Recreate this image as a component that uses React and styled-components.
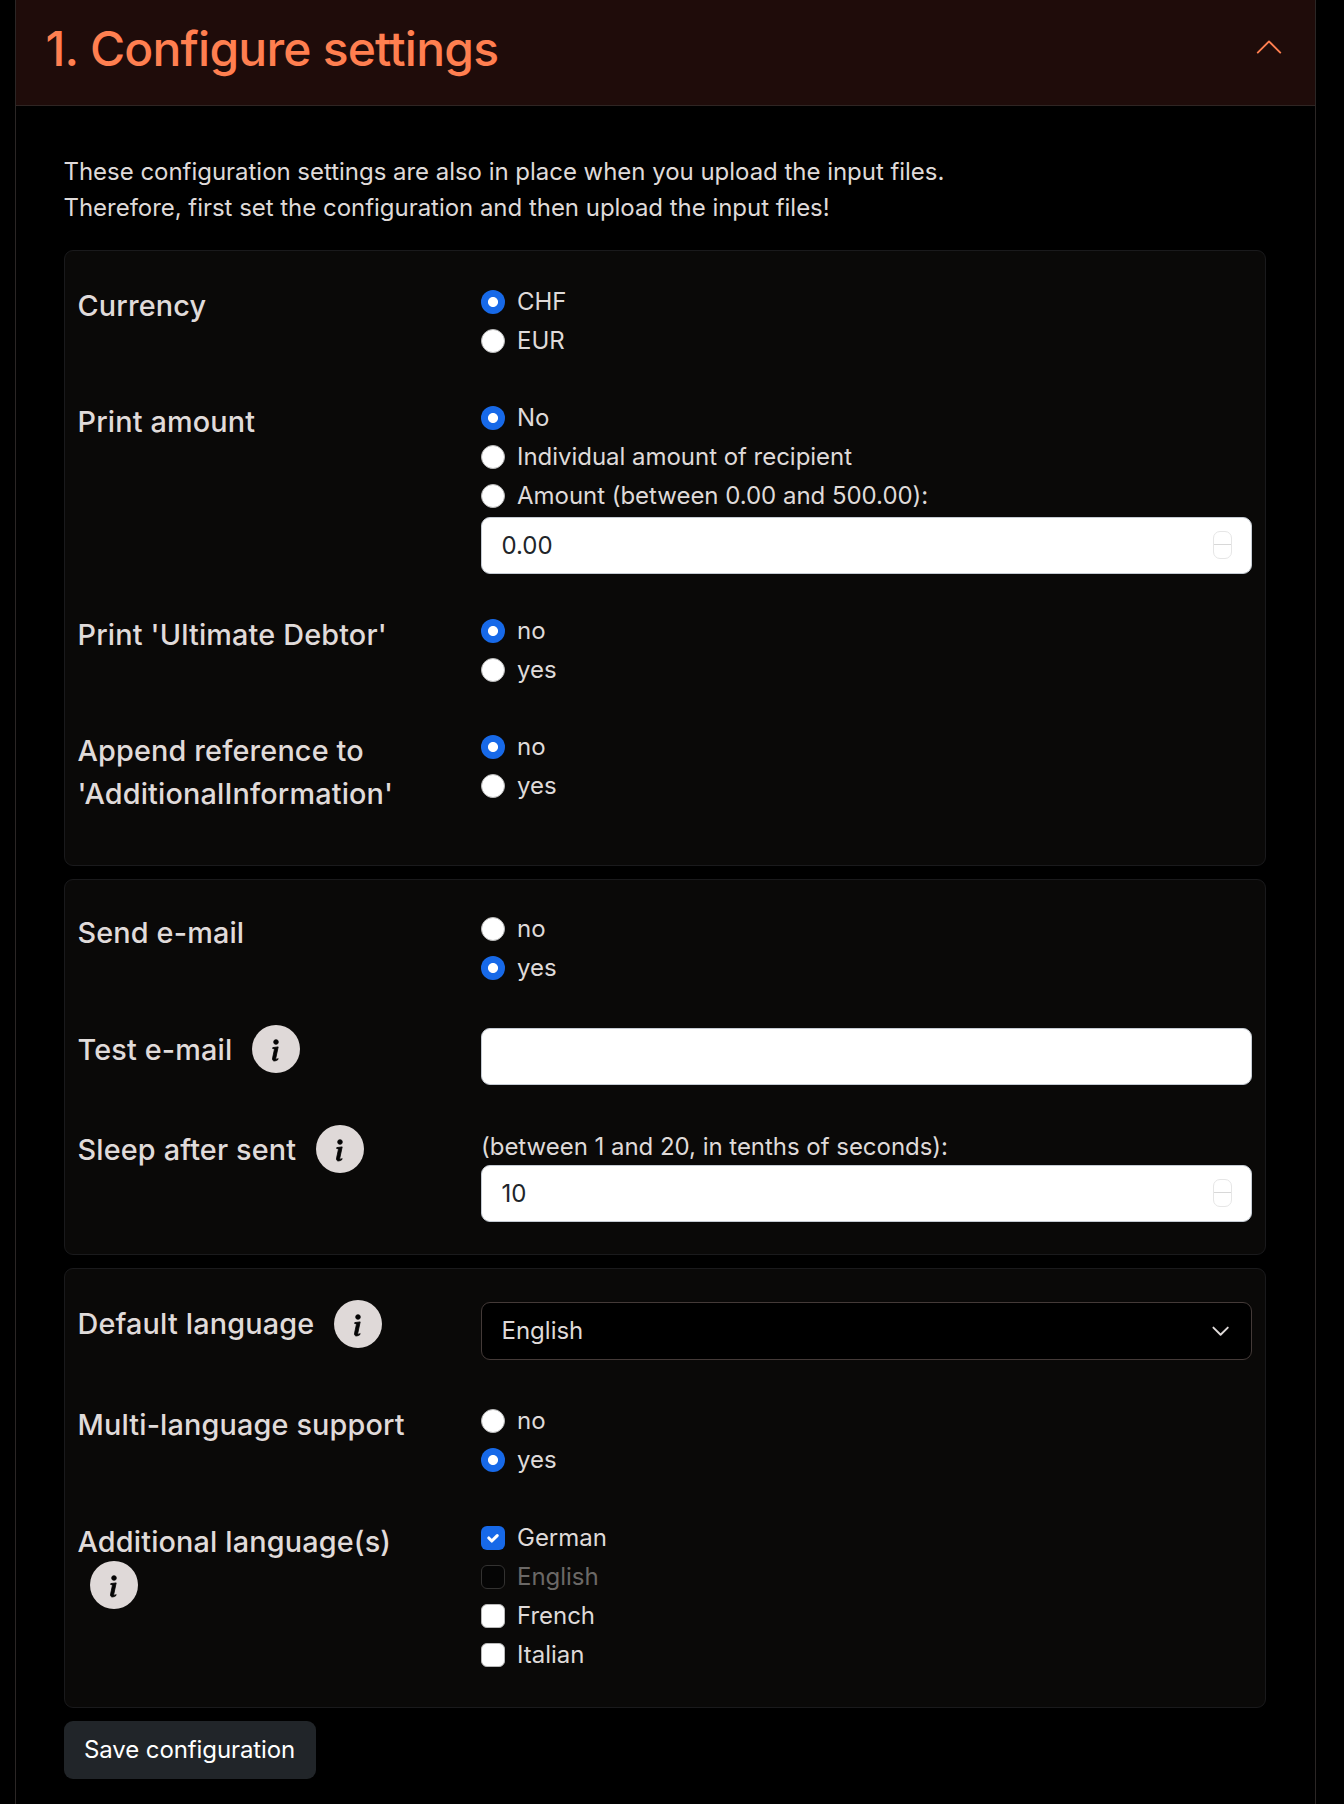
import React from 'react'
import styled, { createGlobalStyle } from 'styled-components'

const GlobalStyle = createGlobalStyle`
html, body {
  margin: 0;
  background: #000;
}
body {
  font-family: Inter, "Liberation Sans", sans-serif;
  font-size: 24px;
  line-height: 36px;
  letter-spacing: -0.03px;
  color: #dfdad9;
  overflow: hidden;
}
`

const Accordion = styled.div`
  box-sizing: border-box;
  width: 1301px;
  height: 1804px;
  margin-left: 14.5px;
  border-left: 1.5px solid #2b2625;
  border-right: 1.5px solid #2b2625;
`

const Header = styled.div`
  box-sizing: border-box;
  height: 106px;
  padding: 0 31px 0 30px;
  display: flex;
  align-items: center;
  justify-content: space-between;
  background: #1f0c0a;
  border-bottom: 1.5px solid #2f2523;
  color: #ff7f50;
`

const Title = styled.h2`
  margin: 0 0 7px;
  font-size: 48px;
  font-weight: 500;
  line-height: 58px;
  letter-spacing: -0.8px;
`

const Chevron = styled.svg`
  width: 30px;
  height: 30px;
  margin-bottom: 12px;
  transform: rotate(180deg);
`

const Body = styled.div`
  padding: 48px 48px 0;
`

const Intro = styled.p`
  margin: 0 0 24px;
`

const Card = styled.section`
  box-sizing: border-box;
  width: 1202px;
  margin-bottom: 13.5px;
  padding: ${p => p.$pt || 32}px 13px 18.5px;
  background: #0a0908;
  border: 1.5px solid #1a1a1c;
  border-radius: 9px;
`

const Row = styled.div`
  display: grid;
  grid-template-columns: 403.5px 1fr;
  margin-bottom: ${p => p.$mb || 38.5}px;
`

const Label = styled.div`
  padding-right: 30px;
  font-size: 28.8px;
  font-weight: 500;
  line-height: 43.2px;
  letter-spacing: 0.16px;
  color: #e0dbda;
`

const InfoSvg = styled.svg`
  display: inline-block;
  width: 48px;
  height: 48px;
  margin: -7px 0 -1px 12px;
  vertical-align: middle;
`

const Option = styled.label`
  display: flex;
  align-items: center;
  gap: 12px;
  height: 36px;
  margin-bottom: 3px;
  color: ${p => (p.$disabled ? '#6b6866' : '#dfdad9')};
`

const Radio = styled.input.attrs({ type: 'radio' })`
  appearance: none;
  box-sizing: border-box;
  width: 24px;
  height: 24px;
  margin: 0;
  border-radius: 50%;
  border: 1.5px solid #b8b8b8;
  background: #fff;

  &:checked {
    border: 0;
    background: radial-gradient(circle, #fff 0 4.6px, #1769e8 5.4px);
  }
`

const CheckWrap = styled.span`
  position: relative;
  display: flex;
  width: 24px;
  height: 24px;
`

const CheckBox = styled.input.attrs({ type: 'checkbox' })`
  appearance: none;
  box-sizing: border-box;
  width: 24px;
  height: 24px;
  margin: 0;
  border-radius: 6px;
  border: 1.5px solid #b8b8b8;
  background: #fff;

  &:checked {
    border: 0;
    background: #1769e8;
  }

  &:disabled {
    border-color: #333231;
    background: #050505;
  }
`

const CheckMark = styled.svg`
  position: absolute;
  inset: 0;
  width: 24px;
  height: 24px;
  pointer-events: none;
`

const HelpText = styled.div`
  margin-top: 1px;
`

const FieldWrap = styled.div`
  position: relative;
  height: 57.5px;
`

const TextField = styled.input`
  box-sizing: border-box;
  width: 100%;
  height: 100%;
  padding: 0 19.5px;
  font: 400 24px/36px Inter, "Liberation Sans", sans-serif;
  color: #212529;
  background: #fff;
  border: 1.5px solid #c5cbd3;
  border-radius: 9px;
  outline: none;
  appearance: textfield;

  &::-webkit-inner-spin-button,
  &::-webkit-outer-spin-button {
    appearance: none;
    margin: 0;
  }
`

const Stepper = styled.span`
  position: absolute;
  top: 14px;
  right: 20px;
  box-sizing: border-box;
  width: 19px;
  height: 28px;
  border: 1.5px solid #e6e6e6;
  border-radius: 7px;

  &::after {
    content: '';
    position: absolute;
    left: 0;
    right: 0;
    top: 12px;
    height: 1.5px;
    background: #d8d8d8;
  }
`

const Select = styled.select`
  box-sizing: border-box;
  width: 100%;
  height: 100%;
  padding: 0 19.5px;
  font: 400 24px/36px Inter, "Liberation Sans", sans-serif;
  color: #dfdad9;
  background: #000;
  border: 1.5px solid #443a38;
  border-radius: 9px;
  outline: none;
  appearance: none;
`

const SelectArrow = styled.svg`
  position: absolute;
  top: 21.8px;
  right: 21.6px;
  width: 19.2px;
  height: 14.4px;
  pointer-events: none;
`

const SaveButton = styled.button`
  box-sizing: border-box;
  height: 58px;
  padding: 0 20.5px;
  font: 400 24px/36px Inter, "Liberation Sans", sans-serif;
  letter-spacing: -0.1px;
  color: #fff;
  background: #212529;
  border: 0;
  border-radius: 9px;
`

const InfoIcon = () => (
  <InfoSvg viewBox="0 0 16 16">
    <circle cx="8" cy="8" r="8" fill="#dfd9d8" />
    <path
      transform="translate(8 8.4) scale(.78) translate(-8 -8)"
      fill="#050505"
      stroke="#050505"
      strokeWidth=".35"
      d="M8.93 6.588l-2.29.287-.082.38.45.083c.294.07.352.176.288.469l-.738 3.468c-.194.897.105 1.319.808 1.319.545 0 1.178-.252 1.465-.598l.088-.416c-.2.176-.492.246-.686.246-.275 0-.375-.193-.304-.533L8.93 6.588zM9 4.5a1 1 0 1 1-2 0 1 1 0 0 1 2 0z"
    />
  </InfoSvg>
)

const RadioOption = ({ name, label, checked }) => (
  <Option>
    <Radio name={name} defaultChecked={checked} />
    {label}
  </Option>
)

const CheckOption = ({ label, checked, disabled }) => (
  <Option $disabled={disabled}>
    <CheckWrap>
      <CheckBox defaultChecked={checked} disabled={disabled} />
      {checked && (
        <CheckMark viewBox="0 0 20 20">
          <path d="m6.5 10 2.5 2.5 4.5-4.5" fill="none" stroke="#fff" strokeWidth="2.6" strokeLinecap="round" strokeLinejoin="round" />
        </CheckMark>
      )}
    </CheckWrap>
    {label}
  </Option>
)

const NumberField = ({ value }) => (
  <FieldWrap>
    <TextField type="number" defaultValue={value} />
    <Stepper />
  </FieldWrap>
)

const App = () => {
  return (
    <>
      <GlobalStyle />
      <Accordion>
        <Header>
          <Title>1. Configure settings</Title>
          <Chevron viewBox="0 0 16 16" fill="#ff7f50">
            <path fillRule="evenodd" d="M1.646 4.646a.5.5 0 0 1 .708 0L8 10.293l5.646-5.647a.5.5 0 0 1 .708.708l-6 6a.5.5 0 0 1-.708 0l-6-6a.5.5 0 0 1 0-.708z" />
          </Chevron>
        </Header>
        <Body>
          <Intro>
            These configuration settings are also in place when you upload the input files.
            <br />
            Therefore, first set the configuration and then upload the input files!
          </Intro>

          <Card $pt={33}>
            <Row $mb={37.5}>
              <Label>Currency</Label>
              <div>
                <RadioOption name="currency" label="CHF" checked />
                <RadioOption name="currency" label="EUR" />
              </div>
            </Row>
            <Row>
              <Label>Print amount</Label>
              <div>
                <RadioOption name="amount" label="No" checked />
                <RadioOption name="amount" label="Individual amount of recipient" />
                <RadioOption name="amount" label="Amount (between 0.00 and 500.00):" />
                <NumberField value="0.00" />
              </div>
            </Row>
            <Row>
              <Label>Print 'Ultimate Debtor'</Label>
              <div>
                <RadioOption name="debtor" label="no" checked />
                <RadioOption name="debtor" label="yes" />
              </div>
            </Row>
            <Row $mb={31}>
              <Label>Append reference to 'AdditionalInformation'</Label>
              <div>
                <RadioOption name="append" label="no" checked />
                <RadioOption name="append" label="yes" />
              </div>
            </Row>
          </Card>

          <Card $pt={31}>
            <Row>
              <Label>Send e-mail</Label>
              <div>
                <RadioOption name="send" label="no" />
                <RadioOption name="send" label="yes" checked />
              </div>
            </Row>
            <Row $mb={42.5}>
              <Label>Test e-mail <InfoIcon /></Label>
              <FieldWrap>
                <TextField type="text" />
              </FieldWrap>
            </Row>
            <Row $mb={13}>
              <Label>Sleep after sent <InfoIcon /></Label>
              <div>
                <HelpText>(between 1 and 20, in tenths of seconds):</HelpText>
                <NumberField value="10" />
              </div>
            </Row>
          </Card>

          <Card $pt={33}>
            <Row $mb={43}>
              <Label>Default language <InfoIcon /></Label>
              <FieldWrap>
                <Select defaultValue="en">
                  <option value="en">English</option>
                  <option value="de">German</option>
                </Select>
                <SelectArrow viewBox="0 0 16 12">
                  <path d="m2 3 6 6 6-6" fill="none" stroke="#dfdad9" strokeWidth="1.6" strokeLinecap="round" strokeLinejoin="round" />
                </SelectArrow>
              </FieldWrap>
            </Row>
            <Row $mb={39.5}>
              <Label>Multi-language support</Label>
              <div>
                <RadioOption name="multi" label="no" />
                <RadioOption name="multi" label="yes" checked />
              </div>
            </Row>
            <Row $mb={12}>
              <Label>Additional language(s) <InfoIcon /></Label>
              <div>
                <CheckOption label="German" checked />
                <CheckOption label="English" disabled />
                <CheckOption label="French" />
                <CheckOption label="Italian" />
              </div>
            </Row>
          </Card>

          <SaveButton>Save configuration</SaveButton>
        </Body>
      </Accordion>
    </>
  )
}

export default App
